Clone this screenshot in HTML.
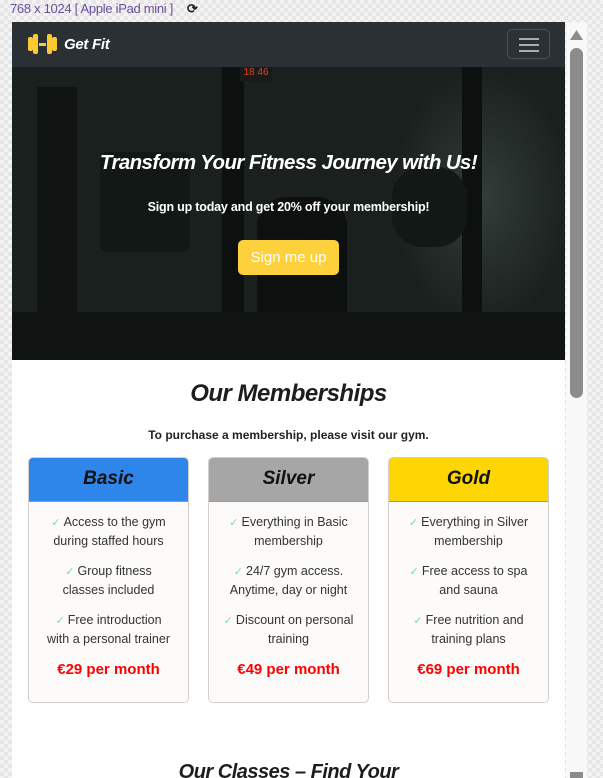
<!DOCTYPE html>
<html><head><meta charset="utf-8">
<style>
*{margin:0;padding:0;box-sizing:border-box}
body{width:603px;height:778px;overflow:hidden;position:relative;font-family:"Liberation Sans",sans-serif;
background-color:#f3f3f3;
background-image:linear-gradient(45deg,#e6e6e6 25%,transparent 25%,transparent 75%,#e6e6e6 75%),linear-gradient(45deg,#e6e6e6 25%,transparent 25%,transparent 75%,#e6e6e6 75%);
background-size:8px 8px;background-position:0 0,4px 4px}
.top{position:absolute;left:10px;top:1px;font-size:13px;color:#6b4f9e;font-family:"Liberation Sans Narrow","Liberation Sans",sans-serif;letter-spacing:-0.3px}
.top span{color:#222;margin-left:14px;font-weight:bold}
.page{position:absolute;left:12px;top:22px;width:553px;height:756px;background:#fff;overflow:hidden}
.nav{height:45px;background:#2b3035;position:relative}
.logo{position:absolute;left:15px;top:10px;display:flex;align-items:center}
.logo b{color:#fff;font-style:italic;font-size:15px;margin-left:6px;letter-spacing:-0.3px}
.burger{position:absolute;right:15px;top:7px;width:43px;height:30px;border:1px solid #4a5057;border-radius:5px}
.burger i{position:absolute;left:11px;width:20px;height:2px;background:#aaa}
.hero{height:293px;position:relative;
background:radial-gradient(ellipse 90px 130px at 470px 130px,#333d39 0%,#1a201e 100%),linear-gradient(90deg,#111614 0%,#1b2220 30%,#222a27 60%,#171d1b 100%)}
.hero .sh{position:absolute;background:#0c100f}
.hero h1{position:absolute;top:84px;width:100%;text-align:center;color:#fff;font-style:italic;font-weight:900;font-size:20.5px;letter-spacing:-0.6px}
.hero p{position:absolute;top:133px;width:100%;text-align:center;color:#fff;font-weight:bold;font-size:12.5px;letter-spacing:-0.2px}
.btn{position:absolute;left:226px;top:173px;width:101px;height:35px;background:#fdd13b;border-radius:5px;color:#fff;font-size:15px;text-align:center;line-height:35px}
h2{position:absolute;top:358px;width:100%;text-align:center;font-style:italic;font-size:24px;color:#1d1d1d;letter-spacing:-0.5px}
.sub{position:absolute;top:406px;width:100%;text-align:center;font-size:12px;font-weight:bold;color:#222}
.card{position:absolute;top:435px;width:161px;height:246px;border:1px solid #d3d0cc;border-radius:5px;background:#fcfbfa;overflow:hidden;text-align:center}
.card .h{height:44px;line-height:42px;font-size:19px;font-weight:bold;font-style:italic;color:#111;border-bottom:1px solid #999}
.card ul{list-style:none;padding:11px 14px 0;font-size:12.5px;line-height:18px;color:#333}
.card li{margin-bottom:12px}
.card li:before{content:"✓ ";color:#6fdcb5;font-size:11px}
.card .pr{position:absolute;top:203px;width:100%;color:#f00;font-weight:bold;font-size:15px}
.h3{position:absolute;top:739px;width:100%;text-align:center;font-style:italic;font-weight:bold;font-size:20px;color:#1d1d1d;letter-spacing:-0.5px}
.sb{position:absolute;left:566px;top:22px;width:21px;height:756px;background:#f8f8f8}
.thumb{position:absolute;left:570px;top:48px;width:13px;height:350px;background:#8c8c8c;border-radius:7px}
</style></head><body>
<div class="top">768 x 1024 [ Apple iPad mini ]<span>⟳</span></div>
<div class="page">
 <div class="nav">
  <div class="logo"><svg width="31" height="24" viewBox="0 0 31 24"><rect x="1" y="5" width="5" height="14" rx="2" fill="#fcc934"/><rect x="6" y="2" width="5" height="20" rx="2" fill="#fcc934"/><rect x="12" y="11" width="7" height="3" fill="#fcc934"/><rect x="20" y="2" width="5" height="20" rx="2" fill="#fcc934"/><rect x="25" y="5" width="5" height="14" rx="2" fill="#fcc934"/></svg><b>Get Fit</b></div>
  <div class="burger"><i style="top:8px"></i><i style="top:14px"></i><i style="top:20px"></i></div>
 </div>
 <div class="hero">
  <div class="sh" style="left:25px;top:20px;width:40px;height:273px;background:#0f1412"></div>
  <div class="sh" style="left:210px;top:0;width:22px;height:293px"></div>
  <div class="sh" style="left:450px;top:0;width:20px;height:293px"></div>
  <div class="sh" style="left:88px;top:85px;width:90px;height:100px;border-radius:8px;background:#121816"></div>
  <div class="sh" style="left:380px;top:100px;width:75px;height:80px;border-radius:30px;background:#121816"></div>
  <div class="sh" style="left:245px;top:130px;width:90px;height:163px;border-radius:30px 30px 0 0"></div>
  <div class="sh" style="left:0;top:245px;width:553px;height:48px;background:#101413"></div>
  <div style="position:absolute;left:228px;top:0;width:32px;height:14px;background:#1a1a1a;color:#e04020;font-size:10px;text-align:center">18 46</div>
  <h1>Transform Your Fitness Journey with Us!</h1>
  <p>Sign up today and get 20% off your membership!</p>
  <div class="btn">Sign me up</div>
 </div>
 <h2>Our Memberships</h2>
 <div class="sub">To purchase a membership, please visit our gym.</div>
 <div class="card" style="left:16px"><div class="h" style="background:#2e86eb">Basic</div><ul><li>Access to the gym during staffed hours</li><li>Group fitness classes included</li><li>Free introduction with a personal trainer</li></ul><div class="pr">€29 per month</div></div>
 <div class="card" style="left:196px"><div class="h" style="background:#a6a6a6">Silver</div><ul><li>Everything in Basic membership</li><li>24/7 gym access. Anytime, day or night</li><li>Discount on personal training</li></ul><div class="pr">€49 per month</div></div>
 <div class="card" style="left:376px"><div class="h" style="background:#fdd500">Gold</div><ul><li>Everything in Silver membership</li><li>Free access to spa and sauna</li><li>Free nutrition and training plans</li></ul><div class="pr">€69 per month</div></div>
 <div class="h3">Our Classes – Find Your</div>
</div>
<div class="sb"></div>
<svg style="position:absolute;left:569px;top:29px" width="15" height="12"><path d="M7.5 1L14 11H1Z" fill="#8c8c8c"/></svg>
<div class="thumb"></div>
<div style="position:absolute;left:570px;top:772px;width:13px;height:6px;background:#8c8c8c"></div>
</body></html>
